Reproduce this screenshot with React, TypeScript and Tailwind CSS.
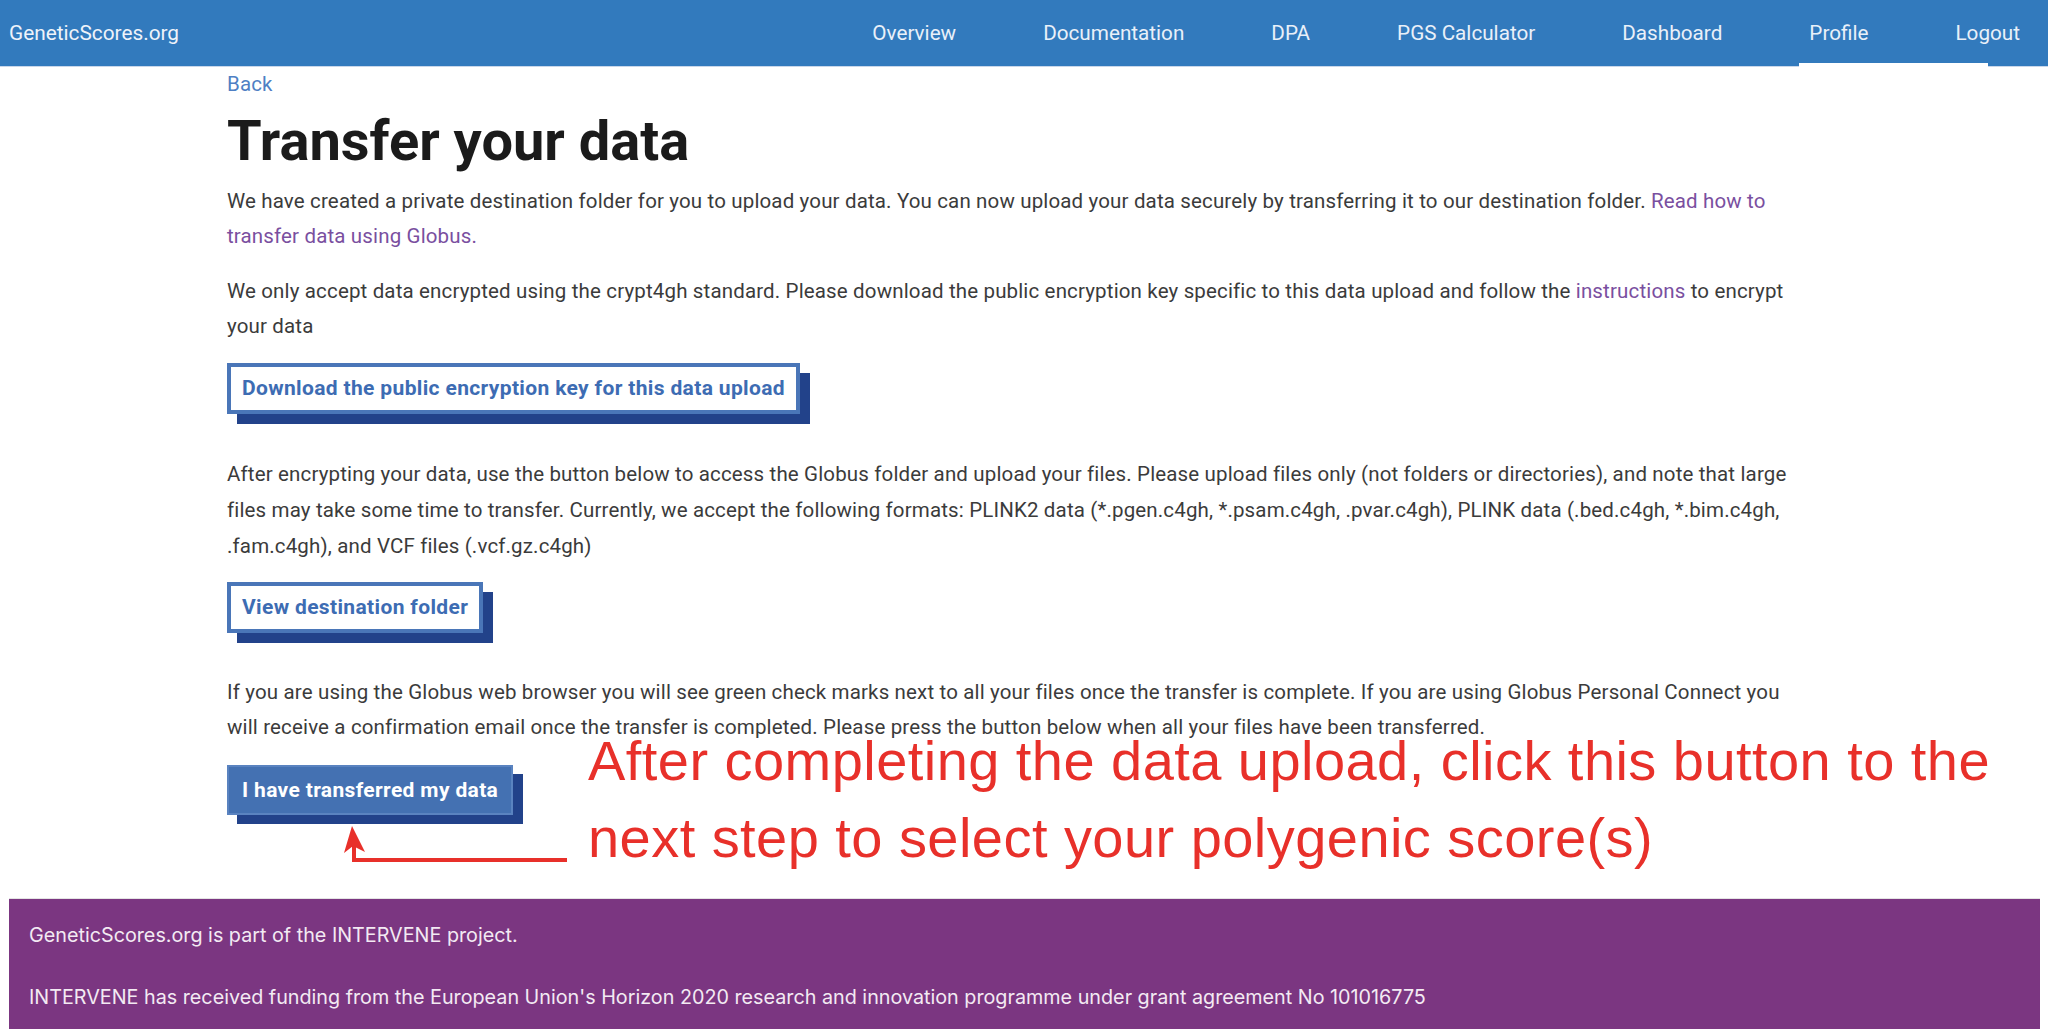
import React from 'react'

const navItems = ['Overview', 'Documentation', 'DPA', 'PGS Calculator', 'Dashboard', 'Profile', 'Logout']

function OutlineButton({ children }: { children: React.ReactNode }) {
  return (
    <button className="border-[4px] border-[#4a76b8] bg-white px-[11px] py-[8px] text-[21px] leading-[27px] tracking-[0.35px] font-bold text-[#3d6cb3] shadow-[10px_10px_0_#22428a] cursor-pointer">
      {children}
    </button>
  )
}

export default function App() {
  return (
    <div className="relative w-[2048px] h-[1032px] overflow-hidden bg-white font-['Roboto',sans-serif] text-[#3b3b3b]">
      <nav className="relative h-[67px] pt-[2px] bg-[#327abd] border-b border-[#c9d7ea] flex items-center">
        <a className="pl-[9px] text-[20.8px] text-[#eef3fa]">GeneticScores.org</a>
        <ul className="ml-auto flex items-center gap-[87px] pr-[28px]">
          {navItems.map((item) => (
            <li key={item} className="text-[20.7px] text-[#e9f0f9]">{item}</li>
          ))}
        </ul>
        <span className="absolute left-[1799px] bottom-[-1px] w-[189px] h-[4px] bg-white" />
      </nav>

      <main className="pl-[227px] w-[1800px] text-[20.5px] tracking-[0.15px]">
        <a className="block leading-[35px] text-[#4f7fc4]">Back</a>
        <h1 className="mt-[7px] text-[56px] leading-[64px] tracking-normal font-bold text-[#1b1b1b]">Transfer your data</h1>
        <p className="mt-[11px] leading-[35px]">
          We have created a private destination folder for you to upload your data. You can now upload your data securely by transferring it to our destination folder. <a className="text-[#7a4fa0]">Read how to transfer data using Globus.</a>
        </p>
        <p className="mt-[20px] leading-[35px]">
          We only accept data encrypted using the crypt4gh standard. Please download the public encryption key specific to this data upload and follow the <a className="text-[#7a4fa0]">instructions</a> to encrypt your data
        </p>
        <div className="mt-[19px]">
          <OutlineButton>Download the public encryption key for this data upload</OutlineButton>
        </div>
        <p className="mt-[42px] leading-[36px]">
          After encrypting your data, use the button below to access the Globus folder and upload your files. Please upload files only (not folders or directories), and note that large files may take some time to transfer. Currently, we accept the following formats: PLINK2 data (*.pgen.c4gh, *.psam.c4gh, .pvar.c4gh), PLINK data (.bed.c4gh, *.bim.c4gh, .fam.c4gh), and VCF files (.vcf.gz.c4gh)
        </p>
        <div className="mt-[18px]">
          <OutlineButton>View destination folder</OutlineButton>
        </div>
        <p className="mt-[42px] leading-[35px]">
          If you are using the Globus web browser you will see green check marks next to all your files once the transfer is complete. If you are using Globus Personal Connect you will receive a confirmation email once the transfer is completed. Please press the button below when all your files have been transferred.
        </p>
        <div className="mt-[20px]">
          <button className="border-[2px] border-[#5a83c0] bg-[#4471b2] px-[13px] py-[10px] text-[21px] leading-[26px] tracking-[0.35px] font-bold text-white shadow-[10px_9px_0_#22428a] cursor-pointer">
            I have transferred my data
          </button>
        </div>
      </main>

      <div className="absolute left-[588px] top-[722px] font-['Liberation_Sans',Arial,sans-serif] text-[56px] leading-[77px] tracking-[0.45px] text-[#e8302a] whitespace-nowrap">
        After completing the data upload, click this button to the
        <br />
        next step to select your polygenic score(s)
      </div>
      <svg className="absolute left-[330px] top-[815px]" width="250" height="60" viewBox="330 815 250 60">
        <path d="M567 860 H354 V846" fill="none" stroke="#e8302a" strokeWidth="4" />
        <path d="M352 826 L365 852 L353 846 L344 853 Z" fill="#e8302a" />
      </svg>

      <footer className="absolute left-[9px] right-[8px] top-[898px] h-[131px] border-t border-[#e4e4e4] bg-[#7b3681] pl-[20px] pt-[21px] font-['Inter',sans-serif] text-[19.75px] text-[#f3eaf3]">
        <p className="leading-[30px]">GeneticScores.org is part of the INTERVENE project.</p>
        <p className="mt-[32px] leading-[30px]">
          INTERVENE has received funding from the European Union's Horizon 2020 research and innovation programme under grant agreement No 101016775
        </p>
      </footer>
    </div>
  )
}
